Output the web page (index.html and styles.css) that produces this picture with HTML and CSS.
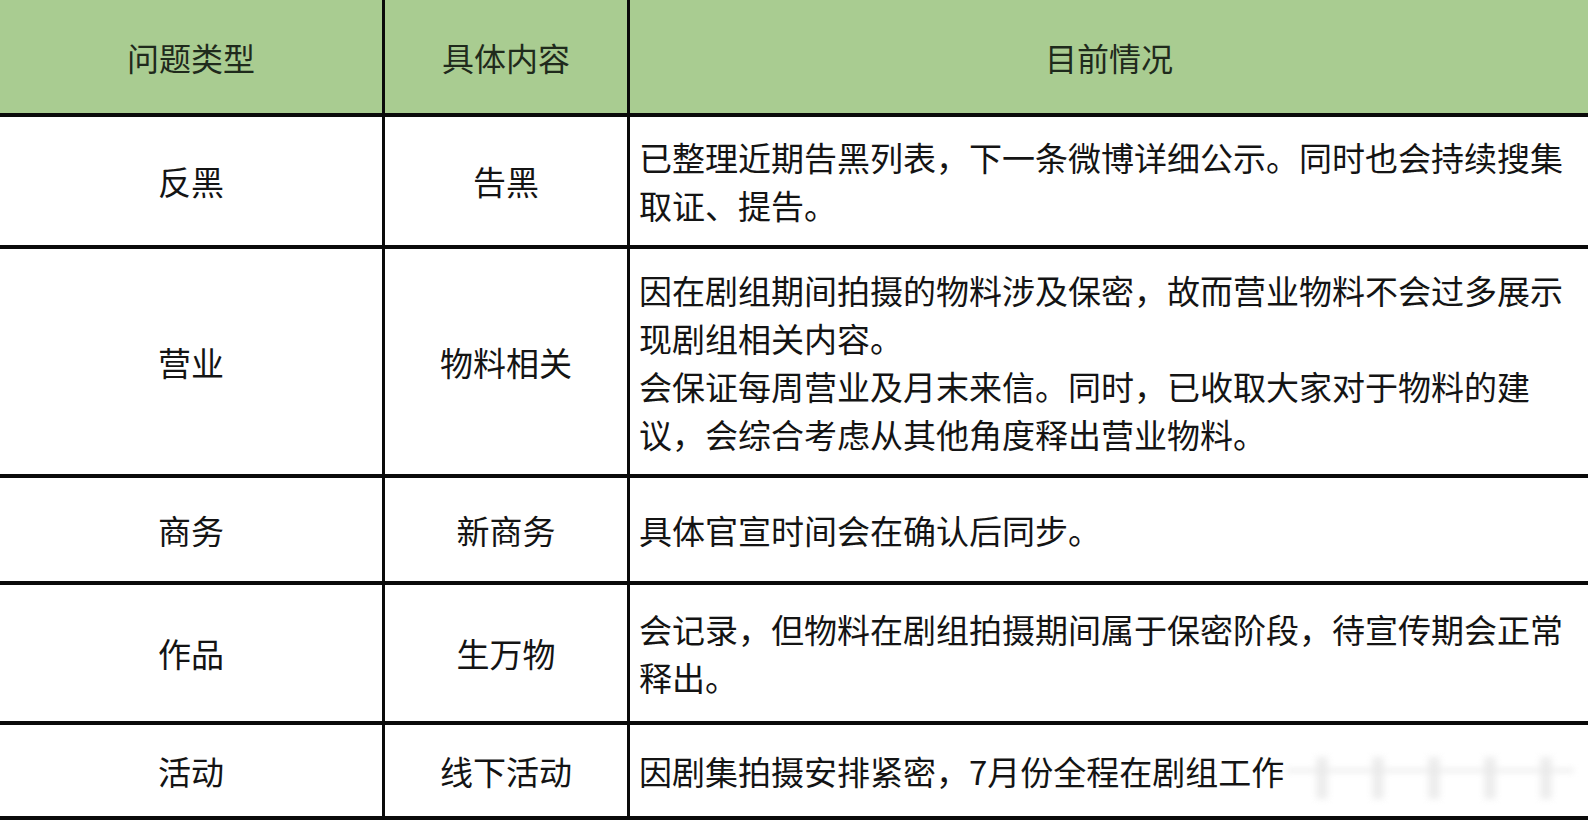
FILE: index.html
```html
<!DOCTYPE html>
<html lang="zh-CN">
<head>
<meta charset="utf-8">
<title>问题类型</title>
<link rel="stylesheet" href="styles.css">
</head>
<body>
<div class="sheet">
  <div class="cell head c1">问题类型</div>
  <div class="cell head c2">具体内容</div>
  <div class="cell head c3 center">目前情况</div>

  <div class="cell c1">反黑</div>
  <div class="cell c2">告黑</div>
  <div class="cell c3">已整理近期告黑列表，下一条微博详细公示。同时也会持续搜集<br>取证、提告。</div>

  <div class="cell c1">营业</div>
  <div class="cell c2">物料相关</div>
  <div class="cell c3">因在剧组期间拍摄的物料涉及保密，故而营业物料不会过多展示<br>现剧组相关内容。<br>会保证每周营业及月末来信。同时，已收取大家对于物料的建<br>议，会综合考虑从其他角度释出营业物料。</div>

  <div class="cell c1">商务</div>
  <div class="cell c2">新商务</div>
  <div class="cell c3">具体官宣时间会在确认后同步。</div>

  <div class="cell c1">作品</div>
  <div class="cell c2">生万物</div>
  <div class="cell c3">会记录，但物料在剧组拍摄期间属于保密阶段，待宣传期会正常<br>释出。</div>

  <div class="cell c1">活动</div>
  <div class="cell c2">线下活动</div>
  <div class="cell c3 last">因剧集拍摄安排紧密，7月份全程在剧组工作<span class="watermark" aria-hidden="true"></span></div>
</div>
</body>
</html>
```
FILE: styles.css
```css
html, body {
  margin: 0;
  padding: 0;
  background: #ffffff;
}
body {
  width: 1588px;
  height: 820px;
  overflow: hidden;
  font-family: "Noto Sans CJK SC", "Noto Sans", sans-serif;
  color: #141414;
}
.sheet {
  display: grid;
  grid-template-columns: 385px 245px 958px;
  grid-template-rows: 117px 132px 229px 107px 140px 95px;
}
.cell {
  box-sizing: border-box;
  border-bottom: 4px solid #0a0a0a;
  display: flex;
  align-items: center;
  font-size: 33px;
  line-height: 48px;
  white-space: nowrap;
}
.c1, .c2 {
  justify-content: center;
  border-right: 3px solid #0a0a0a;
}
.c3 {
  padding-left: 9px;
  position: relative;
}
.c3.center {
  justify-content: center;
  padding-left: 0;
}
.head {
  background: #a9cc91;
  color: #1f2a1c;
  font-size: 32px;
}
.watermark {
  position: absolute;
  left: 656px;
  top: 32px;
  width: 288px;
  height: 42px;
  background:
    linear-gradient(#dcdcdc, #dcdcdc) 0 12px / 100% 3px no-repeat,
    repeating-linear-gradient(90deg, transparent 0 30px, #e6e6e6 30px 42px, transparent 42px 56px);
  filter: blur(3px);
  opacity: 0.7;
}
```
